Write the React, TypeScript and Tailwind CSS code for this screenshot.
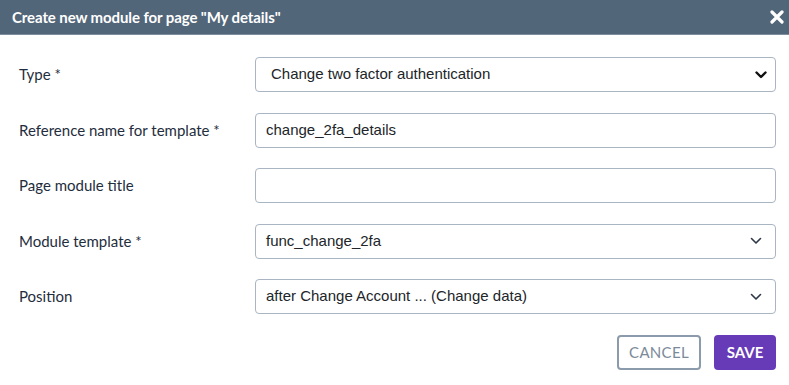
const rows = [
	{ label: 'Type *', kind: 'native', value: 'Change two factor authentication' },
	{ label: 'Reference name for template *', kind: 'input', value: 'change_2fa_details' },
	{ label: 'Page module title', kind: 'input', value: '' },
	{ label: 'Module template *', kind: 'select', value: 'func_change_2fa' },
	{ label: 'Position', kind: 'select', value: 'after Change Account ... (Change data)' },
];

const Chevron = ({ bold }: { bold?: boolean }) => (
	<svg width="12" height="8" viewBox="0 0 12 8" className="shrink-0">
		<path
			d="M1.5 1.5 L6 6 L10.5 1.5"
			fill="none"
			stroke={bold ? '#111' : '#2d3748'}
			strokeWidth={bold ? 2.4 : 1.6}
			strokeLinecap="round"
			strokeLinejoin="round"
		/>
	</svg>
);

export default function App() {
	return (
		<div className="w-[789px] h-[385px] bg-white overflow-hidden">
			<div className="h-[35px] bg-[#52667a] border-b border-[#7d8e9e] flex items-center justify-between pl-[12px] pr-[4px]">
				<h1 className="text-white font-bold text-[15px] font-['Lato',sans-serif] tracking-[-0.1px]">
					Create new module for page "My details"
				</h1>
				<svg width="14" height="14" viewBox="0 0 14 14" className="mr-[1px]">
					<path d="M2 2 L12 12 M12 2 L2 12" stroke="#fff" strokeWidth="3.2" strokeLinecap="round" />
				</svg>
			</div>
			<div className="pt-[22px] pl-[13px] pr-[13px]">
				<div className="flex flex-col gap-[20.5px]">
					{rows.map((r, i) => (
						<div key={i} className="flex items-center">
							<label className="w-[242px] pl-[6px] text-[15px] text-[#1f2d3d] font-['Lato',sans-serif]">
								{r.label}
							</label>
							<div
								className={
									'w-[521px] h-[35px] rounded-[4px] border border-[#a9b5c2] flex items-center ' +
									(r.kind === 'native' ? 'pl-[15px] pr-[8px]' : 'pl-[10px] pr-[13px]')
								}
							>
								<span className="flex-1 text-[15px] text-[#212529] font-['Liberation_Sans',Arial,sans-serif] whitespace-nowrap">
									{r.value}
								</span>
								{r.kind === 'native' && <Chevron bold />}
								{r.kind === 'select' && <Chevron />}
							</div>
						</div>
					))}
				</div>
				<div className="flex justify-end gap-[13px] mt-[21px]">
					<button className="w-[84px] h-[35px] rounded-[4px] border-2 border-[#8c9bab] text-[#7b8a99] text-[15px] font-['Lato',sans-serif] tracking-[0.3px]">
						CANCEL
					</button>
					<button className="w-[62px] h-[35px] rounded-[4px] bg-[#673ab7] text-white text-[15px] font-bold font-['Lato',sans-serif]">
						SAVE
					</button>
				</div>
			</div>
		</div>
	);
}
